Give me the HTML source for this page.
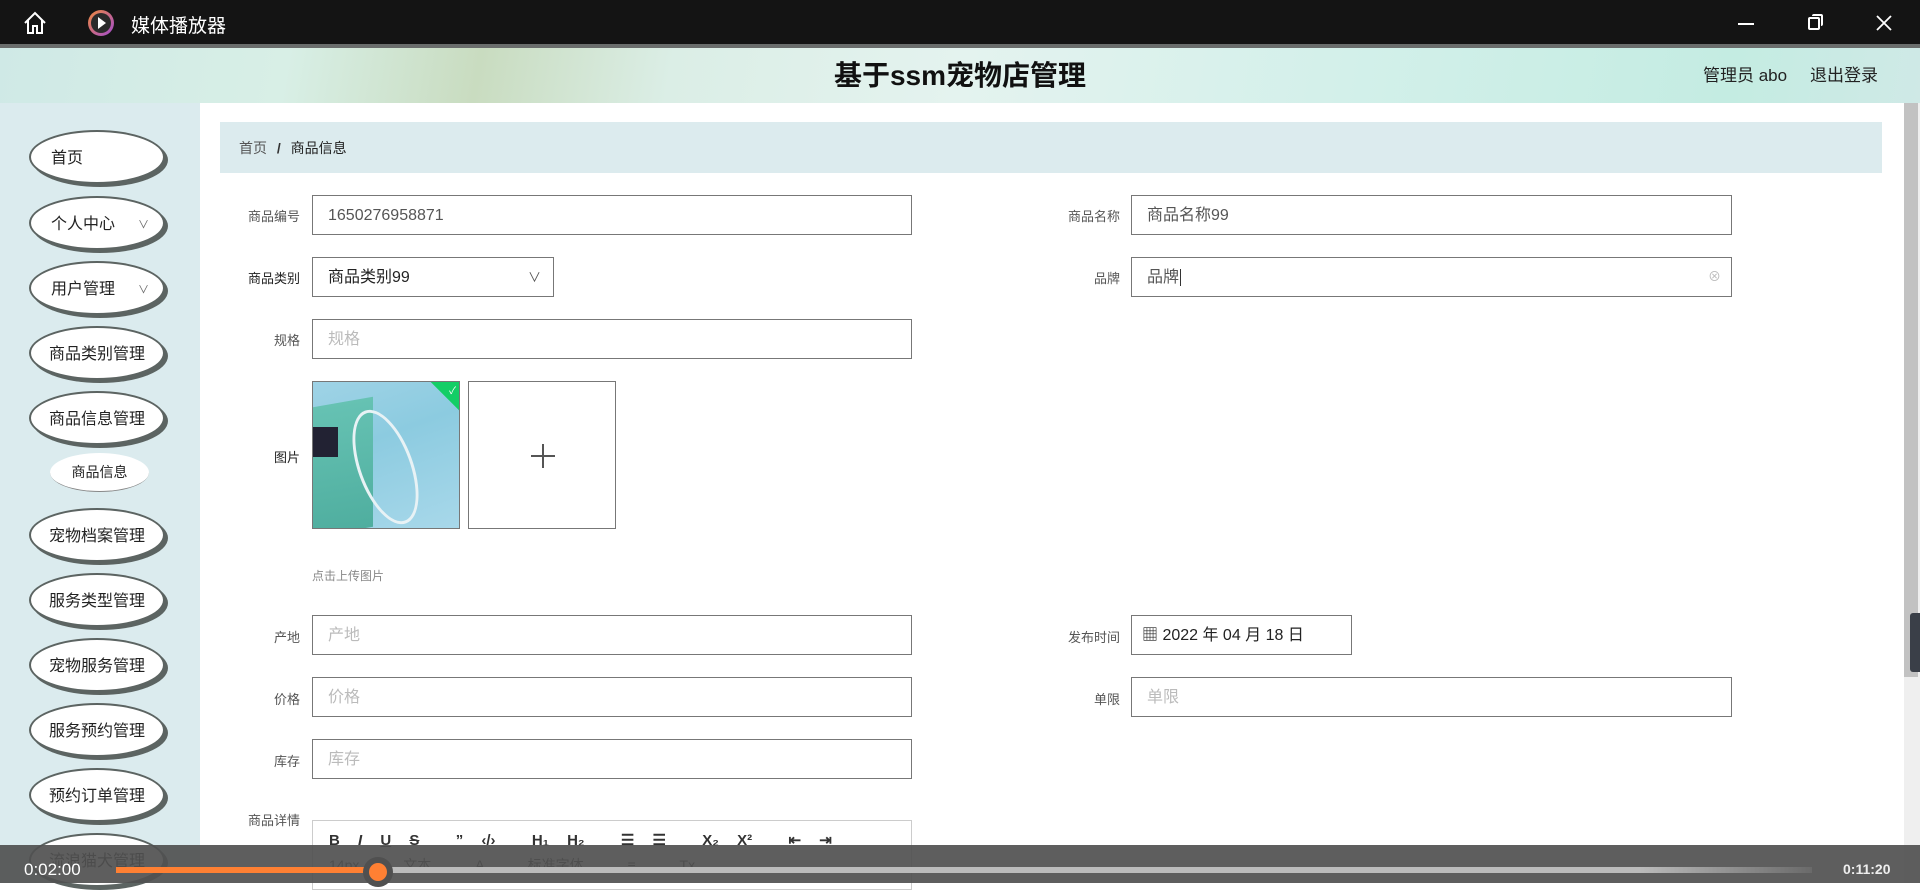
<!DOCTYPE html>
<html><head><meta charset="utf-8">
<style>
*{box-sizing:border-box;margin:0;padding:0}
body{width:1920px;height:883px;overflow:hidden;position:relative;background:#fff;font-family:"Liberation Sans","Noto Sans CJK SC",sans-serif;color:#333}
.abs{position:absolute}
#tb{left:0;top:0;width:1920px;height:44px;background:#141414;color:#fff}
#strip{left:0;top:44px;width:1920px;height:4px;background:#6a6d6c}
#hdr{left:0;top:48px;width:1920px;height:55px;background:linear-gradient(100deg,#cfe9e6 0%,#d8efe6 15%,#c9dcc0 25%,#dbeee6 35%,#e4f3ef 50%,#d3f0ea 70%,#c4ece2 90%,#cfe9e6 100%)}
#side{left:0;top:103px;width:200px;height:780px;background:#dbebee}
.nav{position:absolute;left:29px;width:136px;height:54px;border-radius:50%;background:#fff;border:2px solid #5c6462;box-shadow:3px 3px 0 #5c6462;font-size:16px;color:#222;padding-left:20px;line-height:54px;white-space:nowrap;overflow:hidden}
.nav .ar{position:absolute;right:14px;top:0;font-size:11px;color:#666}
.lbl{position:absolute;font-size:13px;color:#555;text-align:right;width:120px}
.inp{position:absolute;height:40px;border:1px solid #777;background:#fff;font-size:16px;line-height:40px;padding-left:15px;color:#555}
.ph{color:#bbb}
#bar{left:0;top:845px;width:1920px;height:38px;background:rgba(80,80,80,.92)}
</style></head><body>
<div id="tb" class="abs">
 <svg class="abs" style="left:22px;top:11px" width="26" height="24" viewBox="0 0 26 24"><path d="M3 12 L13 2 L23 12 M6 9 V22 H11 V15 H15 V22 H20 V9" fill="none" stroke="#fff" stroke-width="2"/></svg>
 <div class="abs" style="left:88px;top:10px;width:26px;height:26px;border-radius:50%;background:linear-gradient(135deg,#f08a3c,#a04ad0);"></div>
 <div class="abs" style="left:91px;top:13px;width:20px;height:20px;border-radius:50%;background:#2a2a2a"></div>
 <svg class="abs" style="left:97px;top:17px" width="10" height="12"><path d="M1 0 L9 6 L1 12Z" fill="#fff"/></svg>
 <div class="abs" style="left:131px;top:11px;font-size:19px;color:#fff">媒体播放器</div>
 <div class="abs" style="left:1738px;top:23px;width:16px;height:2px;background:#fff"></div>
 <div class="abs" style="left:1808px;top:17px;width:12px;height:13px;border:2px solid #fff;border-radius:2px"></div>
 <div class="abs" style="left:1812px;top:14px;width:11px;height:12px;border-top:2px solid #fff;border-right:2px solid #fff;border-radius:2px"></div>
 <svg class="abs" style="left:1876px;top:15px" width="16" height="16"><path d="M1 1 L15 15 M15 1 L1 15" stroke="#fff" stroke-width="1.8"/></svg>
</div>
<div id="strip" class="abs"></div>
<div id="hdr" class="abs">
 <div class="abs" style="left:0;width:1920px;top:6px;text-align:center;font-size:28px;font-weight:bold;color:#111">基于ssm宠物店管理</div>
 <div class="abs" style="left:1703px;top:13px;font-size:17px;color:#222">管理员 abo</div>
 <div class="abs" style="left:1810px;top:13px;font-size:17px;color:#222">退出登录</div>
</div>
<div id="side" class="abs">
 <div class="nav" style="top:27px">首页</div>
 <div class="nav" style="top:93px">个人中心<span class="ar">∨</span></div>
 <div class="nav" style="top:158px">用户管理<span class="ar">∨</span></div>
 <div class="nav" style="top:223px;padding-left:18px">商品类别管理</div>
 <div class="nav" style="top:288px;padding-left:18px">商品信息管理</div>
 <div class="abs" style="left:50px;top:350px;width:99px;height:39px;border-radius:50%;background:#fff;border-bottom:1px solid #888;font-size:14px;text-align:center;line-height:39px;color:#222">商品信息</div>
 <div class="nav" style="top:405px;padding-left:18px">宠物档案管理</div>
 <div class="nav" style="top:470px;padding-left:18px">服务类型管理</div>
 <div class="nav" style="top:535px;padding-left:18px">宠物服务管理</div>
 <div class="nav" style="top:600px;padding-left:18px">服务预约管理</div>
 <div class="nav" style="top:665px;padding-left:18px">预约订单管理</div>
 <div class="nav" style="top:730px;padding-left:18px">流浪猫犬管理</div>
</div>
<div class="abs" style="left:1904px;top:103px;width:16px;height:780px;background:#efefef"></div>
<div class="abs" style="left:1904px;top:103px;width:14px;height:574px;background:#c2c2c2"></div>
<div class="abs" style="left:1910px;top:613px;width:10px;height:59px;background:#3a3f48;border-radius:3px 0 0 3px"></div>
<div class="abs" style="left:220px;top:122px;width:1662px;height:51px;background:#dcebee;font-size:14px;line-height:53px;padding-left:19px;color:#555">首页 <b style="color:#333;margin:0 6px">/</b> <span style="color:#222">商品信息</span></div>

<div class="lbl" style="left:180px;top:206px">商品编号</div>
<div class="inp" style="left:312px;top:195px;width:600px">1650276958871</div>
<div class="lbl" style="left:1000px;top:206px">商品名称</div>
<div class="inp" style="left:1131px;top:195px;width:601px">商品名称99</div>

<div class="lbl" style="left:180px;top:268px;color:#222">商品类别</div>
<div class="inp" style="left:312px;top:257px;width:242px;color:#222">商品类别99<span class="abs" style="right:12px;top:0;font-size:13px;color:#555">∨</span></div>
<div class="lbl" style="left:1000px;top:268px">品牌</div>
<div class="inp" style="left:1131px;top:257px;width:601px">品牌<span style="border-left:1px solid #333;margin-left:1px"></span><span class="abs" style="right:10px;top:-1px;font-size:13px;color:#bbb">⊗</span></div>

<div class="lbl" style="left:180px;top:330px">规格</div>
<div class="inp ph" style="left:312px;top:319px;width:600px">规格</div>

<div class="lbl" style="left:180px;top:447px;color:#222">图片</div>
<div class="abs" style="left:312px;top:381px;width:148px;height:148px;border:1px solid #777;overflow:hidden;background:linear-gradient(160deg,#9fd3e6 0%,#8ccbe0 40%,#a8d8ea 100%)">
 <div class="abs" style="left:0;top:20px;width:60px;height:130px;background:linear-gradient(180deg,#66c2b3,#4fae9f);transform:skewY(-10deg)"></div>
 <div class="abs" style="left:0;top:45px;width:25px;height:30px;background:#223"></div>
 <div class="abs" style="left:45px;top:25px;width:55px;height:120px;border:3px solid #e8f2f5;border-radius:50%;transform:rotate(-20deg)"></div>
 <div class="abs" style="right:-20px;top:-20px;width:40px;height:40px;background:#13ce66;transform:rotate(45deg)"></div>
 <div class="abs" style="right:3px;top:0;color:#fff;font-size:10px">✓</div>
</div>
<div class="abs" style="left:468px;top:381px;width:148px;height:148px;border:1px solid #777">
 <div class="abs" style="left:62px;top:73px;width:24px;height:2px;background:#555"></div>
 <div class="abs" style="left:73px;top:62px;width:2px;height:24px;background:#555"></div>
</div>
<div class="abs" style="left:312px;top:567px;font-size:12px;color:#888">点击上传图片</div>

<div class="lbl" style="left:180px;top:627px">产地</div>
<div class="inp ph" style="left:312px;top:615px;width:600px">产地</div>
<div class="lbl" style="left:1000px;top:627px">发布时间</div>
<div class="inp" style="left:1131px;top:615px;width:221px;color:#222;padding-left:10px">▦ 2022 年 04 月 18 日</div>

<div class="lbl" style="left:180px;top:689px">价格</div>
<div class="inp ph" style="left:312px;top:677px;width:600px">价格</div>
<div class="lbl" style="left:1000px;top:689px">单限</div>
<div class="inp ph" style="left:1131px;top:677px;width:601px">单限</div>

<div class="lbl" style="left:180px;top:751px">库存</div>
<div class="inp ph" style="left:312px;top:739px;width:600px">库存</div>

<div class="lbl" style="left:180px;top:810px">商品详情</div>
<div class="abs" style="left:312px;top:820px;width:600px;height:70px;border:1px solid #ccc">
 <div class="abs" style="left:16px;top:10px;font-size:15px;font-weight:bold;color:#333;word-spacing:14px;white-space:nowrap">B <i>I</i> <u>U</u> <s>S</s> &nbsp;” ‹/› &nbsp;H₁ H₂ &nbsp;☰ ☰ &nbsp;X₂ X² &nbsp;⇤ ⇥</div>
 <div class="abs" style="left:16px;top:34px;font-size:14px;color:#333;white-space:nowrap;word-spacing:40px">14px 文本 A 标准字体 ≡ Tx</div>
</div>

<div id="bar" class="abs">
 <div class="abs" style="left:24px;top:15px;font-size:17px;color:#fff">0:02:00</div>
 <div class="abs" style="left:116px;top:22px;width:250px;height:6px;background:#ff8033"></div>
 <div class="abs" style="left:366px;top:22px;width:1446px;height:6px;background:linear-gradient(90deg,#bcbcbc 0%,#bcbcbc 88%,#6a6a6a 100%)"></div>
 <div class="abs" style="left:363px;top:12px;width:30px;height:30px;border-radius:50%;background:#505050"></div>
 <div class="abs" style="left:369px;top:18px;width:18px;height:18px;border-radius:50%;background:#ff8033"></div>
 <div class="abs" style="left:1843px;top:16px;font-size:14px;font-weight:bold;color:#eee">0:11:20</div>
</div>
</body></html>
